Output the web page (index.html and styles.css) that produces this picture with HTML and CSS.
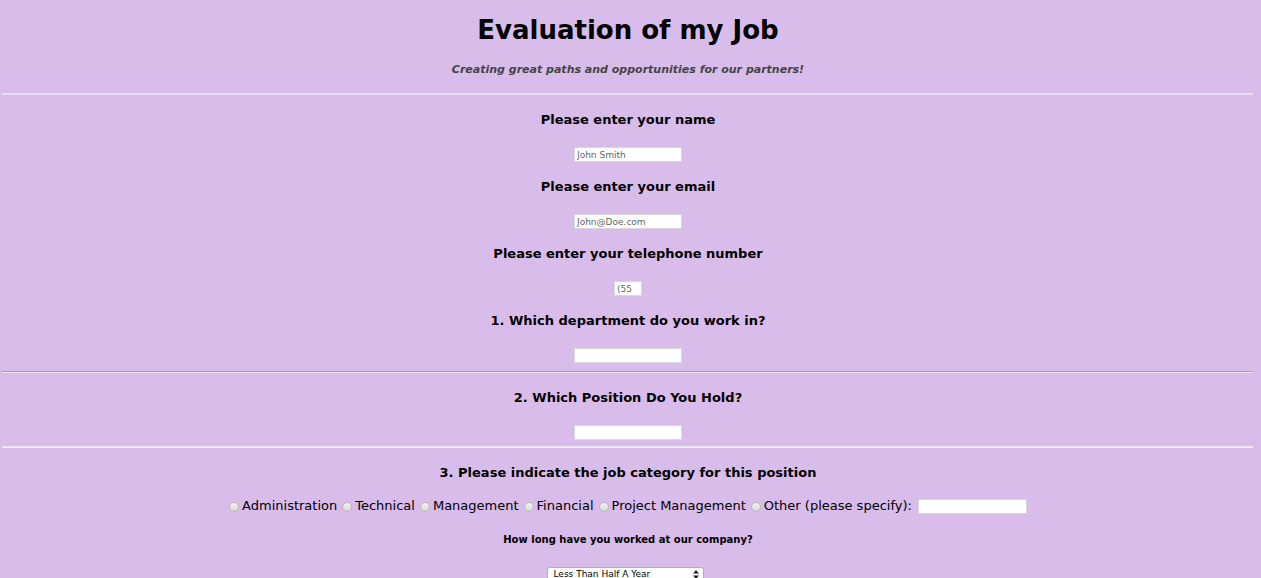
FILE: index.html
```
<!DOCTYPE html>
<html>
<head>
<meta charset="utf-8">
<link rel="stylesheet" href="styles.css">
</head>
<body>
<header class="head">
  <h1 class="title">Evaluation of my Job</h1>
  <p class="tagline">Creating great paths and opportunities for our partners!</p>
</header>
<hr class="rule rule-top">
<form class="form">
  <section class="block block-first">
    <h3 class="label">Please enter your name</h3>
    <input class="field" type="text" value="John Smith">
    <h3 class="label">Please enter your email</h3>
    <input class="field" type="text" value="John@Doe.com">
    <h3 class="label">Please enter your telephone number</h3>
    <input class="field field-tel" type="text" value="(55">
    <h3 class="label">1. Which department do you work in?</h3>
    <input class="field" type="text">
  </section>
  <hr class="rule rule-dark">
  <section class="block">
    <h3 class="label">2. Which Position Do You Hold?</h3>
    <input class="field" type="text">
  </section>
  <hr class="rule rule-light">
  <section class="block">
    <h3 class="label">3. Please indicate the job category for this position</h3>
    <div class="choices">
      <label class="choice"><span class="radio"></span>Administration</label>
      <label class="choice"><span class="radio"></span>Technical</label>
      <label class="choice"><span class="radio"></span>Management</label>
      <label class="choice"><span class="radio"></span>Financial</label>
      <label class="choice"><span class="radio"></span>Project Management</label>
      <label class="choice"><span class="radio"></span>Other (please specify):</label>
      <input class="field field-other" type="text">
    </div>
    <h4 class="small-label">How long have you worked at our company?</h4>
    <div class="select">
      <span class="select-text">Less Than Half A Year</span>
      <svg class="select-arrows" width="6" height="9" viewBox="0 0 6 9"><path d="M0 3.5 L3 0 L6 3.5 Z M0 5.5 L3 9 L6 5.5 Z" fill="#222"/></svg>
    </div>
  </section>
</form>
</body>
</html>
```
FILE: styles.css
```
html, body {
  margin: 0;
  padding: 0;
}
body {
  background: #d8bcea;
  font-family: "DejaVu Sans", Verdana, sans-serif;
  color: #000;
  overflow: hidden;
  height: 578px;
  margin-right: 5px;
}
.head {
  display: flex;
  flex-direction: column;
  align-items: center;
}
.title {
  margin: 14px 0 0;
  font-size: 26px;
  font-weight: bold;
  line-height: 32px;
}
.tagline {
  margin: 17px 0 0;
  font-size: 11px;
  font-style: italic;
  font-weight: bold;
  color: #444;
  line-height: 14px;
}
.rule {
  margin: 0 3px 0 2px;
  height: 0;
  border: 0;
}
.rule-top {
  margin-top: 16px;
  border-top: 1px solid #f0e6f6;
  border-bottom: 1px solid #e6d8ef;
}
.rule-light {
  border-top: 1px solid #ece2f2;
  border-bottom: 1px solid #f2eaf6;
}
.rule-dark {
  border-top: 1px solid #a2a0a4;
  border-bottom: 1px solid #ece4f2;
}
.block {
  display: flex;
  flex-direction: column;
  align-items: center;
}
.label {
  margin: 0;
  font-size: 13px;
  font-weight: bold;
  line-height: 18px;
}
.block > .label:first-child {
  margin-top: 16px;
}
.field {
  display: block;
  box-sizing: border-box;
  margin: 18px 0 16px;
  width: 108px;
  height: 15px;
  padding: 0 2px;
  border: 1px solid #d8d8d8;
  background: #fff;
  font-family: "DejaVu Sans", Verdana, sans-serif;
  font-size: 9px;
  color: #666;
  outline: none;
}
.block > .field:last-child {
  margin-bottom: 6px;
}
.block-first > .field:last-child {
  margin-bottom: 8px;
}
.field-tel {
  width: 28px;
}
.choices {
  display: flex;
  align-items: center;
  margin-top: 15px;
  font-size: 13px;
  line-height: 18px;
  gap: 5px;
}
.choice {
  display: flex;
  align-items: center;
}
.radio {
  display: inline-block;
  width: 8px;
  height: 8px;
  border-radius: 50%;
  border: 1px solid #b8b8b8;
  background: linear-gradient(#f4f4f4, #d8d8d8);
  margin-right: 3px;
  margin-top: 1px;
}
.choices .field-other {
  margin: 0 0 0 1px;
  width: 109px;
}
.small-label {
  margin: 18px 0 0;
  font-size: 10px;
  font-weight: bold;
  line-height: 14px;
}
.select {
  margin: 20px 6px 0 0;
  box-sizing: border-box;
  width: 157px;
  height: 14px;
  display: flex;
  align-items: center;
  justify-content: space-between;
  padding: 0 4px 0 6px;
  background: #fff;
  border: 1px solid #b0b0b0;
  border-radius: 3px;
  font-size: 9px;
}
.select-text {
  font-family: "DejaVu Sans", Verdana, sans-serif;
}
```
